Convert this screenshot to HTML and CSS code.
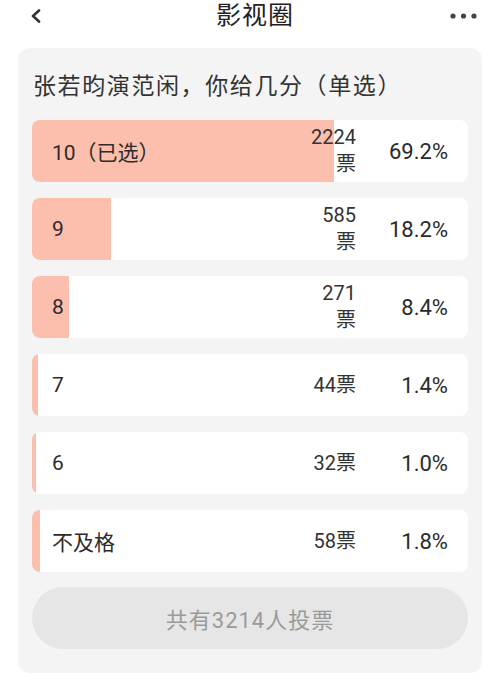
FILE: index.html
```html
<!DOCTYPE html>
<html lang="zh-CN">
<head>
<meta charset="utf-8">
<title>影视圈</title>
<link rel="stylesheet" href="styles.css">
</head>
<body>
<header class="topbar">
  <div class="back">
    <svg width="12" height="14" viewBox="0 0 12 14"><path d="M9 1.5 L3 7 L9 12.5" fill="none" stroke="#333" stroke-width="2.6" stroke-linecap="round" stroke-linejoin="round"/></svg>
  </div>
  <div class="title">影视圈</div>
  <div class="more">
    <svg width="30" height="8" viewBox="0 0 30 8"><circle cx="3" cy="4" r="2.6" fill="#444"/><circle cx="13.5" cy="4" r="2.6" fill="#444"/><circle cx="24" cy="4" r="2.6" fill="#444"/></svg>
  </div>
</header>
<main class="card">
  <div class="question">张若昀演范闲，你给几分（单选）</div>
  <div class="options">
    <div class="option" style="--p:69.2%"><span class="label">10（已选）</span><span class="votes">2224票</span><span class="pct">69.2%</span></div>
    <div class="option" style="--p:18.2%"><span class="label">9</span><span class="votes">585票</span><span class="pct">18.2%</span></div>
    <div class="option" style="--p:8.4%"><span class="label">8</span><span class="votes">271票</span><span class="pct">8.4%</span></div>
    <div class="option" style="--p:1.4%"><span class="label">7</span><span class="votes">44票</span><span class="pct">1.4%</span></div>
    <div class="option" style="--p:1.0%"><span class="label">6</span><span class="votes">32票</span><span class="pct">1.0%</span></div>
    <div class="option" style="--p:1.8%"><span class="label">不及格</span><span class="votes">58票</span><span class="pct">1.8%</span></div>
  </div>
  <div class="total">共有3214人投票</div>
</main>
</body>
</html>
```
FILE: styles.css
```css
html, body {
  margin: 0;
  padding: 0;
  background: #fff;
  font-family: Roboto, "Noto Sans CJK SC", sans-serif;
  color: #333;
}
.topbar {
  display: grid;
  grid-template-columns: 1fr auto 1fr;
  align-items: center;
  height: 32px;
  padding: 0 20px 0 30px;
}
.back { display: flex; align-items: center; }
.title {
  font-size: 25px;
  letter-spacing: 1px;
  color: #222;
  line-height: 32px;
}
.more { display: flex; justify-content: flex-end; }
.card {
  margin: 16px 18px 0;
  background: #f4f4f4;
  border-radius: 12px;
  padding: 24px 14px 24px;
}
.question {
  font-size: 23px;
  letter-spacing: 1.6px;
  line-height: 30px;
  color: #333;
  padding-left: 1px;
}
.options {
  display: flex;
  flex-direction: column;
  gap: 16px;
  margin-top: 18px;
}
.option {
  display: flex;
  align-items: center;
  height: 62px;
  border-radius: 8px;
  padding: 0 20px;
  background: linear-gradient(to right, #fcbead var(--p), #fff var(--p));
}
.label {
  flex: 1;
  font-size: 21px;
  color: #2e2b2a;
}
.votes {
  width: 47px;
  text-align: right;
  font-size: 20px;
  line-height: 27px;
  color: #333;
}
.pct {
  width: 70px;
  margin-left: 22px;
  text-align: right;
  font-size: 22px;
  color: #2a2a2a;
}
.total {
  margin-top: 15px;
  height: 62px;
  border-radius: 31px;
  background: #e6e6e6;
  color: #9a9a9a;
  font-size: 22px;
  letter-spacing: 1px;
  display: flex;
  align-items: center;
  justify-content: center;
}
```
